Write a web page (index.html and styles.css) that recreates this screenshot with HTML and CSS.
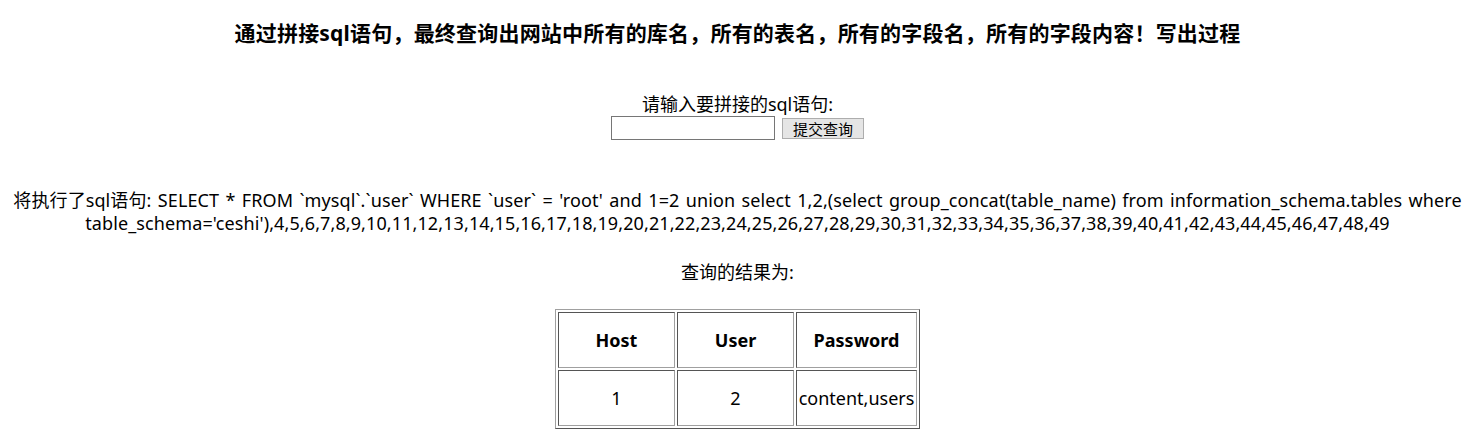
FILE: index.html
```html
<!DOCTYPE html>
<html>
<head>
<meta charset="utf-8">
<link rel="stylesheet" href="styles.css">
</head>
<body>
<div class="page">
  <h3 class="title">通过拼接sql语句，最终查询出网站中所有的库名，所有的表名，所有的字段名，所有的字段内容！写出过程</h3>
  <form class="form">
    <div class="prompt">请输入要拼接的sql语句:</div>
    <div class="row">
      <input class="field" type="text">
      <button class="btn" type="button">提交查询</button>
    </div>
  </form>
  <p class="sql"><span class="sql-line1">将执行了sql语句: SELECT * FROM `mysql`.`user` WHERE `user` = 'root' and 1=2 union select 1,2,(select group_concat(table_name) from information_schema.tables where</span><br>table_schema='ceshi'),4,5,6,7,8,9,10,11,12,13,14,15,16,17,18,19,20,21,22,23,24,25,26,27,28,29,30,31,32,33,34,35,36,37,38,39,40,41,42,43,44,45,46,47,48,49</p>
  <p class="label">查询的结果为:</p>
  <table class="result">
    <tr><th class="c1">Host</th><th class="c2">User</th><th class="c3">Password</th></tr>
    <tr><td>1</td><td>2</td><td>content,users</td></tr>
  </table>
</div>
</body>
</html>
```
FILE: styles.css
```css
html, body {
  margin: 0;
  padding: 0;
  background: #fff;
}
body {
  font-family: "Noto Sans", "Noto Sans CJK SC", sans-serif;
  color: #000;
  font-size: 18px;
}
.page {
  display: flex;
  flex-direction: column;
  align-items: center;
  text-align: center;
  padding: 0 8px;
}
.title {
  margin: 19px 0 0;
  font-size: 21px;
  line-height: 28px;
  font-weight: bold;
  letter-spacing: 0.2px;
}
.form {
  margin: 45px 0 0;
  display: flex;
  flex-direction: column;
  align-items: center;
}
.prompt {
  line-height: 24px;
}
.row {
  display: flex;
  align-items: center;
  gap: 7px;
  margin-top: 0;
}
.field {
  box-sizing: border-box;
  width: 164px;
  height: 24px;
  border: 1px solid #767676;
  margin: 0;
  padding: 1px 2px;
}
.btn {
  box-sizing: border-box;
  width: 82px;
  height: 21px;
  margin: 0;
  padding: 0;
  border: 1px solid #adadad;
  background: #e5e5e5;
  font-family: "Noto Sans CJK SC", sans-serif;
  font-size: 15px;
  line-height: 19px;
  color: #000;
}
.sql {
  margin: 49px 0 0;
  line-height: 23px;
  white-space: nowrap;
  letter-spacing: 0.1px;
}
.sql-line1 { word-spacing: 1.55px; }
.label {
  margin: 25px 0 0;
  line-height: 24px;
}
.result {
  margin-top: 25px;
  border-collapse: separate;
  border-spacing: 2px;
  border: 1px solid;
  border-color: #a0a0a0 #555 #555 #a0a0a0;
}
.result th, .result td {
  box-sizing: border-box;
  height: 56px;
  padding: 1px;
  border: 1px solid;
  border-color: #555 #a0a0a0 #a0a0a0 #555;
  text-align: center;
  vertical-align: middle;
  line-height: 24px;
}
.result th { font-weight: bold; }
.c1 { width: 117px; }
.c2 { width: 117px; }
.c3 { width: 121px; }
```
